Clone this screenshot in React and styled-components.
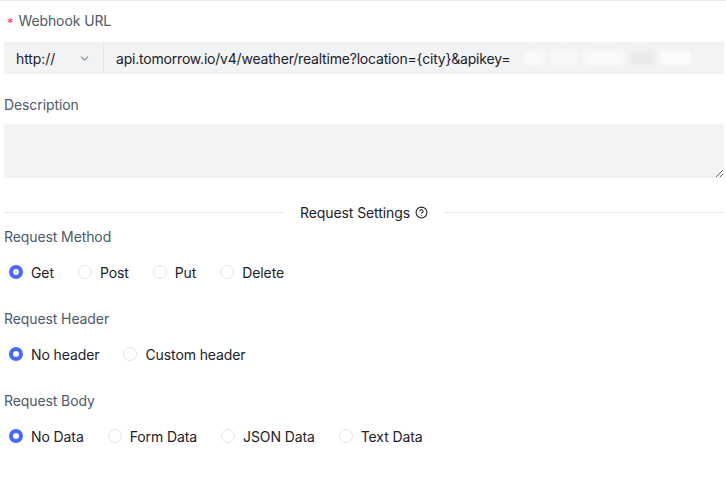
import React, { useState } from 'react'
import styled, { createGlobalStyle } from 'styled-components'
import { ChevronDown, CircleHelp } from 'lucide-react'

const Global = createGlobalStyle`
    body {
        margin: 0;
        font-family: Inter, "Noto Sans", sans-serif;
        font-size: 14px;
        letter-spacing: -0.1px;
        color: #1d2129;
        background: #fff;
    }
`

const Page = styled.div`
    border-top: 1px solid #ececec;
    padding: 7px 2px 20px 4px;
`

const Item = styled.div`
    margin-bottom: 20px;
`

const Label = styled.div`
    line-height: 22px;
    color: #4e5969;
    margin-bottom: 8px;
    display: flex;
    align-items: center;
`

const Star = styled.span`
    color: #f53f3f;
    font-size: 13px;
    margin: 4px 5px 0 3px;
`

const Group = styled.div`
    display: flex;
    height: 32px;
    background: #f2f3f5;
    border-radius: 2px;
    align-items: center;
`

const Select = styled.div`
    width: 100px;
    height: 100%;
    box-sizing: border-box;
    padding: 0 12px;
    display: flex;
    align-items: center;
    justify-content: space-between;
    border-right: 1px solid #e5e6eb;
    color: #1d2129;
`

const UrlText = styled.div`
    flex: 1;
    padding: 0 12px;
    display: flex;
    align-items: center;
    color: #1d2129;
    white-space: nowrap;
    letter-spacing: -0.2px;
`

const Blur = styled.span`
    display: inline-flex;
    gap: 6px;
    margin-left: 14px;
    filter: blur(2px);
`

const Blob = styled.span`
    display: inline-block;
    width: ${p => p.w}px;
    height: ${p => p.h || 14}px;
    background: ${p => p.c || '#fafafa'};
`

const Area = styled.textarea`
    display: block;
    width: 100%;
    height: 54px;
    box-sizing: border-box;
    border: none;
    border-radius: 2px;
    background: #f2f3f5;
    resize: vertical;
    outline: none;
    font: inherit;
`

const Divider = styled.div`
    display: flex;
    align-items: center;
    margin: 23px 0 3px;
    height: 22px;
    &::before, &::after {
        content: '';
        flex: 1;
        height: 1px;
        background: #e5e6eb;
    }
`

const DividerText = styled.span`
    padding: 0 16px;
    color: #1d2129;
    display: flex;
    align-items: center;
    gap: 5px;
`

const Radios = styled.div`
    display: flex;
    align-items: center;
    height: 32px;
    padding-left: 5px;
`

const RadioItem = styled.label`
    display: flex;
    align-items: center;
    margin-right: 24px;
    cursor: pointer;
    color: #1d2129;
`

const Circle = styled.span`
    width: 14px;
    height: 14px;
    box-sizing: border-box;
    border-radius: 50%;
    margin-right: 8px;
    border: ${p => (p.checked ? '4px solid #4669fa' : '1.5px solid #e3e4e8')};
    background: #fff;
`

const RadioGroup = ({ options, value, onChange }) => (
    <Radios>
        {options.map(o => (
            <RadioItem key={o} onClick={() => onChange(o)}>
                <Circle checked={o === value} />
                {o}
            </RadioItem>
        ))}
    </Radios>
)

const App = () => {
    let [method, setMethod] = useState('Get')
    let [header, setHeader] = useState('No header')
    let [body, setBody] = useState('No Data')
    return (
        <Page>
            <Global />
            <Item>
                <Label><Star>*</Star>Webhook URL</Label>
                <Group>
                    <Select>http://<ChevronDown size={13} color="#86909c" /></Select>
                    <UrlText>
                        api.tomorrow.io/v4/weather/realtime?location={'{city}'}&amp;apikey=
                        <Blur>
                            <Blob w={20} />
                            <Blob w={28} c="#f7f7f8" />
                            <Blob w={40} />
                            <Blob w={24} c="#e9eaec" />
                            <Blob w={30} c="#fcfcfc" />
                        </Blur>
                    </UrlText>
                </Group>
            </Item>
            <Item>
                <Label>Description</Label>
                <Area />
            </Item>
            <Divider>
                <DividerText>Request Settings <CircleHelp size={13} strokeWidth={2} /></DividerText>
            </Divider>
            <Item>
                <Label>Request Method</Label>
                <RadioGroup options={['Get', 'Post', 'Put', 'Delete']} value={method} onChange={setMethod} />
            </Item>
            <Item>
                <Label>Request Header</Label>
                <RadioGroup options={['No header', 'Custom header']} value={header} onChange={setHeader} />
            </Item>
            <Item>
                <Label>Request Body</Label>
                <RadioGroup options={['No Data', 'Form Data', 'JSON Data', 'Text Data']} value={body} onChange={setBody} />
            </Item>
        </Page>
    )
}

export default App
